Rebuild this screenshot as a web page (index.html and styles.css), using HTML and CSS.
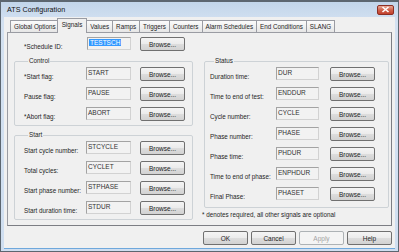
FILE: index.html
```html
<!DOCTYPE html>
<html>
<head>
  <title>ATS Configuration</title>
  <link rel="stylesheet" href="styles.css">
</head>
<body>
  <div class="window">
    <div class="titlebar">
      <span class="title">ATS Configuration</span>
      <span class="close">
        <svg width="9" height="7" viewBox="0 0 9 7"><path d="M1.5 1 L7.5 6 M7.5 1 L1.5 6" stroke="#fff" stroke-width="1.6"/></svg>
      </span>
    </div>

    <div class="client">
      <div class="tabs">
        <span class="tab">Global Options</span>
        <span class="tab active">Signals</span>
        <span class="tab">Values</span>
        <span class="tab">Ramps</span>
        <span class="tab">Triggers</span>
        <span class="tab">Counters</span>
        <span class="tab">Alarm Schedules</span>
        <span class="tab">End Conditions</span>
        <span class="tab">SLANG</span>
      </div>

      <div class="panel">
        <div class="schedule">
          <label>*Schedule ID:</label>
          <span class="field"><span class="selected">TESTSCH</span></span>
          <button class="btn">Browse...</button>
        </div>

        <div class="columns">
          <div class="left">
            <fieldset class="group control">
              <legend>Control</legend>
              <div class="rows">
                <label>*Start flag:</label><span class="field">START</span><button class="btn">Browse...</button>
                <label>Pause flag:</label><span class="field">PAUSE</span><button class="btn">Browse...</button>
                <label>*Abort flag:</label><span class="field">ABORT</span><button class="btn">Browse...</button>
              </div>
            </fieldset>

            <fieldset class="group start">
              <legend>Start</legend>
              <div class="rows">
                <label>Start cycle number:</label><span class="field">STCYCLE</span><button class="btn">Browse...</button>
                <label>Total cycles:</label><span class="field">CYCLET</span><button class="btn">Browse...</button>
                <label>Start phase number:</label><span class="field">STPHASE</span><button class="btn">Browse...</button>
                <label>Start duration time:</label><span class="field">STDUR</span><button class="btn">Browse...</button>
              </div>
            </fieldset>
          </div>

          <div class="right">
            <fieldset class="group status">
              <legend>Status</legend>
              <div class="rows">
                <label>Duration time:</label><span class="field">DUR</span><button class="btn">Browse...</button>
                <label>Time to end of test:</label><span class="field">ENDDUR</span><button class="btn">Browse...</button>
                <label>Cycle number:</label><span class="field">CYCLE</span><button class="btn">Browse...</button>
                <label>Phase number:</label><span class="field">PHASE</span><button class="btn">Browse...</button>
                <label>Phase time:</label><span class="field">PHDUR</span><button class="btn">Browse...</button>
                <label>Time to end of phase:</label><span class="field">ENPHDUR</span><button class="btn">Browse...</button>
                <label>Final Phase:</label><span class="field">PHASET</span><button class="btn">Browse...</button>
              </div>
            </fieldset>
            <p class="note">* denotes required, all other signals are optional</p>
          </div>
        </div>
      </div>

      <div class="actions">
        <button class="btn">OK</button>
        <button class="btn">Cancel</button>
        <button class="btn disabled">Apply</button>
        <button class="btn">Help</button>
      </div>
    </div>
  </div>
</body>
</html>
```

FILE: styles.css
```css
body {
  margin: 0;
  font-family: "Liberation Sans", Arial, sans-serif;
  font-size: 6.3px;
  color: #1e1e1e;
  background: #ffffff;
}

.window {
  width: 399px;
  height: 252px;
  box-sizing: border-box;
  border: 1px solid #5c6670;
  border-top-width: 2px;
  background: linear-gradient(#c2d5ea, #d3e1f1 20px, #cfdef0);
  display: flex;
  flex-direction: column;
  padding: 0 3px 3px;
}

.titlebar {
  height: 15px;
  display: flex;
  align-items: center;
  justify-content: space-between;
  padding: 0 1px 0 3px;
}

.title {
  font-size: 7.2px;
  color: #111;
}

.close {
  width: 15px;
  height: 8px;
  display: flex;
  align-items: center;
  justify-content: center;
  border: 1px solid #8c2f24;
  border-radius: 2px;
  background: linear-gradient(#e9a896, #d0624c 50%, #c2402c);
}

.client {
  flex: 1;
  background: #f0f0f0;
  display: flex;
  flex-direction: column;
  padding: 3px 3px 3px;
  box-shadow: 0 1px 0 #6fa8dc;
}

.tabs {
  display: flex;
  align-items: flex-end;
  height: 12px;
  padding-left: 3px;
}

.tab {
  height: 11px;
  line-height: 11px;
  padding: 0 3px;
  margin-right: -1px;
  border: 1px solid #9a9ca3;
  border-bottom: none;
  background: linear-gradient(#fbfbfb, #e6e6e6);
  white-space: nowrap;
}

.tab.active {
  position: relative;
  z-index: 1;
  height: 14px;
  line-height: 12px;
  margin: 0 -1px -1px -2px;
  padding: 0 4px;
  background: #f0f0f0;
}

.panel {
  height: 194px;
  box-sizing: border-box;
  border: 1px solid #9a9ca3;
  border-right-color: #7c7e84;
  border-bottom-color: #7c7e84;
  padding: 4px 0 0 6px;
}

.schedule {
  display: grid;
  grid-template-columns: 54px 44px 45px;
  grid-template-rows: 14px;
  column-gap: 9px;
  padding-left: 10px;
}

label {
  align-self: end;
  line-height: 8px;
  white-space: nowrap;
}

.field {
  box-sizing: border-box;
  height: 13px;
  border: 1px solid #a3a3a3;
  border-right-color: #d2d2d2;
  border-bottom-color: #d2d2d2;
  background: #f2f2f2;
  padding: 1px 1px;
  line-height: 8px;
  font-size: 6.5px;
  color: #333;
}

.selected {
  background: #3399ff;
  color: #fff;
  padding: 0 1px;
}

.btn {
  box-sizing: border-box;
  height: 14px;
  width: 45px;
  padding: 0;
  font-family: inherit;
  font-size: 6.5px;
  color: #1e1e1e;
  border: 1px solid #707070;
  border-radius: 2px;
  background: linear-gradient(#f4f4f4, #ebebeb 50%, #dddddd 51%, #d2d2d2);
}

.btn.disabled {
  color: #a3a3a3;
  border-color: #adb2b5;
  background: #f4f4f4;
}

.columns {
  display: flex;
  gap: 11px;
  margin-top: 6px;
}

.group {
  box-sizing: border-box;
  margin: 0;
  min-width: 0;
  border: 1px solid #cdd2d6;
  border-radius: 2px;
}

.group legend {
  padding: 0 1px;
  margin-left: 4px;
  line-height: 8px;
}

.rows {
  display: grid;
  grid-auto-rows: 14px;
  row-gap: 6px;
}

.control,
.start {
  width: 179px;
  padding: 2px 0 4px 9px;
}

.control .rows,
.start .rows {
  grid-template-columns: 53px 45px 45px;
  column-gap: 9px;
}

.start {
  margin-top: 5px;
}

.status {
  width: 185px;
  padding: 2px 0 6px 5px;
}

.status .rows {
  grid-template-columns: 55px 43px 45px;
  column-gap: 11px;
}

.note {
  margin: 3px 0 0 -2px;
  line-height: 8px;
}

.actions {
  display: flex;
  justify-content: flex-end;
  gap: 3px;
  margin-top: 5px;
  padding-right: 0;
}
```
